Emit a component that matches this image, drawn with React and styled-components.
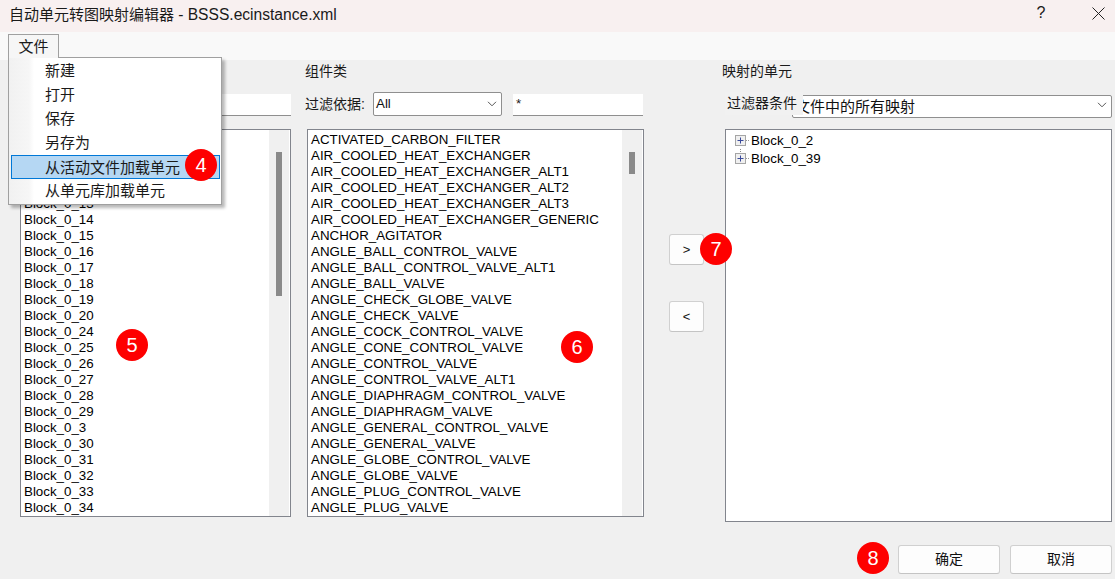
import React from 'react'
import styled, { createGlobalStyle } from 'styled-components'

const GlobalStyle = createGlobalStyle`
  html, body {
    margin: 0;
    padding: 0;
    overflow: hidden;
    background: #f0f0f0;
  }
`

const FONT = `"Liberation Sans", "Noto Sans CJK SC", sans-serif`

// the first rows of this list sit behind the open menu
const leftRows = [
  '', '', '', '', 'Block_0_13',
  'Block_0_14', 'Block_0_15', 'Block_0_16', 'Block_0_17', 'Block_0_18', 'Block_0_19',
  'Block_0_20', 'Block_0_24', 'Block_0_25', 'Block_0_26', 'Block_0_27', 'Block_0_28',
  'Block_0_29', 'Block_0_3', 'Block_0_30', 'Block_0_31', 'Block_0_32', 'Block_0_33', 'Block_0_34',
]

const classRows = [
  'ACTIVATED_CARBON_FILTER', 'AIR_COOLED_HEAT_EXCHANGER', 'AIR_COOLED_HEAT_EXCHANGER_ALT1',
  'AIR_COOLED_HEAT_EXCHANGER_ALT2', 'AIR_COOLED_HEAT_EXCHANGER_ALT3', 'AIR_COOLED_HEAT_EXCHANGER_GENERIC',
  'ANCHOR_AGITATOR', 'ANGLE_BALL_CONTROL_VALVE', 'ANGLE_BALL_CONTROL_VALVE_ALT1', 'ANGLE_BALL_VALVE',
  'ANGLE_CHECK_GLOBE_VALVE', 'ANGLE_CHECK_VALVE', 'ANGLE_COCK_CONTROL_VALVE', 'ANGLE_CONE_CONTROL_VALVE',
  'ANGLE_CONTROL_VALVE', 'ANGLE_CONTROL_VALVE_ALT1', 'ANGLE_DIAPHRAGM_CONTROL_VALVE', 'ANGLE_DIAPHRAGM_VALVE',
  'ANGLE_GENERAL_CONTROL_VALVE', 'ANGLE_GENERAL_VALVE', 'ANGLE_GLOBE_CONTROL_VALVE', 'ANGLE_GLOBE_VALVE',
  'ANGLE_PLUG_CONTROL_VALVE', 'ANGLE_PLUG_VALVE',
]

const menuItems = ['新建', '打开', '保存', '另存为', '从活动文件加载单元', '从单元库加载单元']

const Window = styled.div`
  position: relative;
  width: 1115px;
  height: 579px;
  overflow: hidden;
  display: flex;
  flex-direction: column;
  background: #f0f0f0;
  font-family: ${FONT};
  color: #000;
`

const TitleBar = styled.div`
  height: 32px;
  flex: none;
  box-sizing: border-box;
  display: flex;
  align-items: center;
  padding: 0 0 6px 9px;
  background: #f8f0f0;
  font-size: 15px;
  color: #1a1a1a;
`

const TitleText = styled.span`
  flex: 1;
`

const TitleFile = styled.span`
  font-size: 15.6px;
`

const TitleButton = styled.div`
  width: ${p => p.$width}px;
  height: 26px;
  margin-right: ${p => p.$gap || 0}px;
  display: flex;
  align-items: center;
  justify-content: center;
  font-size: 16px;
`

const MenuBar = styled.div`
  height: 28px;
  flex: none;
  background: #f9f9f9;
`

const Content = styled.div`
  flex: 1;
  display: flex;
  flex-direction: column;
  padding: 0 3px 5px 20px;
`

const Columns = styled.div`
  height: 462px;
  flex: none;
  display: grid;
  grid-template-columns: 271px 337px 49px 387px;
  column-gap: 16px;
`

const Column = styled.div`
  display: flex;
  flex-direction: column;
`

const ColumnTitle = styled.div`
  height: 24px;
  padding-bottom: 4px;
  margin-left: ${p => p.$indent || 0}px;
  display: flex;
  align-items: center;
  font-size: 14px;
  color: #1a1a1a;
  box-sizing: border-box;
`

const FilterRow = styled.div`
  position: relative;
  height: ${p => p.$height || 24}px;
  margin-top: ${p => p.$top || 8}px;
  display: flex;
  align-items: flex-end;
  font-size: 14px;
  color: #1a1a1a;
`

const FilterLabel = styled.span`
  width: 68px;
  flex: none;
  align-self: center;
  margin-left: -2px;
  padding-bottom: 3px;
`

const Combo = styled.div`
  height: ${p => p.$height}px;
  width: ${p => p.$width}px;
  margin-left: ${p => p.$left || 0}px;
  flex: none;
  box-sizing: border-box;
  border: 1px solid #8f8f8f;
  border-radius: 2px;
  background: #fff;
  display: flex;
  align-items: center;
  padding: 0 0 ${p => p.$lift || 0}px 2px;
  font-size: ${p => p.$size || 13.33}px;
  color: #111;
`

const ComboText = styled.span`
  flex: 1;
  white-space: nowrap;
`

const Chevron = styled.svg`
  width: 10px;
  height: 6px;
  margin-right: 4px;
  flex: none;
`

const TextInput = styled.div`
  height: 22px;
  width: ${p => p.$width}px;
  flex: none;
  margin-left: ${p => p.$left || 0}px;
  box-sizing: border-box;
  border-bottom: 1px solid #8f8f8f;
  background: #fff;
  padding: 2px 0 0 3px;
  font-size: 13.33px;
`

const OverLabel = styled.div`
  position: absolute;
  left: 0;
  top: -3px;
  width: 78px;
  height: 23px;
  box-sizing: border-box;
  padding: 0 0 3px 2px;
  background: #f1f1f1;
  display: flex;
  align-items: center;
  font-size: 14px;
  white-space: nowrap;
  overflow: hidden;
  color: #1a1a1a;
`

const ListBox = styled.div`
  height: ${p => p.$height || 388}px;
  margin-top: ${p => p.$top || 13}px;
  box-sizing: border-box;
  border: 1px solid #82858d;
  background: #fff;
  display: flex;
  overflow: hidden;
`

const ListRows = styled.div`
  flex: 1;
  padding: 2px 0 0 3px;
  overflow: hidden;
`

const ListRow = styled.div`
  height: 16px;
  line-height: 16px;
  font-size: 13.33px;
  white-space: nowrap;
`

const ScrollTrack = styled.div`
  width: 20px;
  flex: none;
  margin-right: 1px;
  background: #f0f0f0;
  display: flex;
  justify-content: center;
`

const ScrollThumb = styled.div`
  width: 6px;
  height: ${p => p.$height}px;
  margin-top: 22px;
  background: #8a8a8a;
`

const MoveButtons = styled.div`
  display: flex;
  flex-direction: column;
  align-items: flex-start;
  gap: 36px;
  padding-top: 174px;
  margin-left: 9px;
`

const ActionButton = styled.button`
  width: ${p => p.$width}px;
  height: ${p => p.$height}px;
  padding: 0 0 ${p => p.$lift || 0}px;
  box-sizing: border-box;
  border: 1px solid #d0d0d0;
  border-bottom-color: #c4c4c4;
  border-radius: 3px;
  background: #fdfdfd;
  font-family: ${FONT};
  font-size: ${p => p.$size || 14}px;
  color: #111;
`

const TreeRows = styled.div`
  padding: 1px 0 0 8px;
`

const TreeRow = styled.div`
  height: 18px;
  display: flex;
  align-items: center;
  font-size: 13.33px;
`

const TreeIcon = styled.svg`
  width: 17px;
  height: 18px;
  flex: none;
`

const Footer = styled.div`
  margin-top: 23px;
  display: flex;
  justify-content: flex-end;
  gap: 10px;
`

const FileTab = styled.div`
  position: absolute;
  left: 8px;
  top: 34px;
  width: 51px;
  height: 24px;
  box-sizing: border-box;
  padding-bottom: 3px;
  border: 1px solid #a0a0a0;
  border-bottom: none;
  background: #f6f6f6;
  z-index: 3;
  display: flex;
  align-items: center;
  justify-content: center;
  font-size: 15px;
  color: #1a1a1a;
`

const DropMenu = styled.div`
  position: absolute;
  left: 8px;
  top: 57px;
  width: 214px;
  height: 148px;
  box-sizing: border-box;
  border: 1px solid #a0a0a0;
  box-shadow: 3px 3px 3px rgba(0, 0, 0, 0.28);
  background: linear-gradient(to right, #f1f1f1 0, #f6f6f6 20px, #fff 25px);
  z-index: 2;
  padding: 1px;
`

const MenuItem = styled.div`
  height: 24px;
  box-sizing: border-box;
  display: flex;
  align-items: center;
  margin-left: ${p => (p.$active ? 1 : 0)}px;
  padding: 0 0 ${p => (p.$active ? 2 : 4)}px ${p => (p.$active ? 33 : 35)}px;
  font-size: 15px;
  color: #1a1a1a;
  border: ${p => (p.$active ? '1px solid #0078d7' : 'none')};
  background: ${p => (p.$active ? '#b5d7f3' : 'transparent')};
`

const Badge = styled.div`
  position: absolute;
  left: ${p => p.$x - 16}px;
  top: ${p => p.$y - 16}px;
  width: 32px;
  height: 32px;
  border-radius: 50%;
  background: #fe0000;
  color: #fff;
  display: flex;
  align-items: center;
  justify-content: center;
  font-size: 20px;
  z-index: 4;
`

const badges = [
  { n: 4, x: 201, y: 165 },
  { n: 5, x: 132, y: 345 },
  { n: 6, x: 577, y: 347 },
  { n: 7, x: 716, y: 249 },
  { n: 8, x: 873, y: 558 },
]

const Expander = ({ first }) => (
  <TreeIcon viewBox="0 0 17 18">
    <rect x="1.5" y="4.5" width="10" height="10" fill="#f0f0f0" stroke="#a5a5a5" />
    <path d="M3.5 9.5h6M6.5 6.5v6" stroke="#3a4a9a" fill="none" />
    <path d="M12 9.5h4" stroke="#999" strokeDasharray="1 1" fill="none" />
    {!first && <path d="M6.5 0v4" stroke="#888" strokeDasharray="1 1" fill="none" />}
  </TreeIcon>
)

const ChevronIcon = () => (
  <Chevron viewBox="0 0 10 6">
    <path d="M1 .8l4 4 4-4" stroke="#555" fill="none" />
  </Chevron>
)

const App = () => {
  return (
    <Window>
      <GlobalStyle />
      <TitleBar>
        <TitleText>自动单元转图映射编辑器 <TitleFile>- BSSS.ecinstance.xml</TitleFile></TitleText>
        <TitleButton $width={46} $gap={17}>?</TitleButton>
        <TitleButton $width={34}>
          <svg width="13" height="13" viewBox="0 0 13 13">
            <path d="M.5.5l12 12M12.5.5l-12 12" stroke="#222" fill="none" />
          </svg>
        </TitleButton>
      </TitleBar>
      <MenuBar />

      <Content>
        <Columns>
          <Column>
            <ColumnTitle />
            <FilterRow>
              <TextInput $width={271} />
            </FilterRow>
            <ListBox>
              <ListRows>
                {leftRows.map((name, i) => <ListRow key={i}>{name}</ListRow>)}
              </ListRows>
              <ScrollTrack><ScrollThumb $height={144} /></ScrollTrack>
            </ListBox>
          </Column>

          <Column>
            <ColumnTitle $indent={-2}>组件类</ColumnTitle>
            <FilterRow>
              <FilterLabel>过滤依据:</FilterLabel>
              <Combo $width={129} $height={24} $lift={1}>
                <ComboText>All</ComboText>
                <ChevronIcon />
              </Combo>
              <TextInput $width={130} $left={11}>*</TextInput>
            </FilterRow>
            <ListBox>
              <ListRows>
                {classRows.map(name => <ListRow key={name}>{name}</ListRow>)}
              </ListRows>
              <ScrollTrack><ScrollThumb $height={22} /></ScrollTrack>
            </ListBox>
          </Column>

          <MoveButtons>
            <ActionButton $width={35} $height={31} $size={13}>&gt;</ActionButton>
            <ActionButton $width={35} $height={31} $size={13}>&lt;</ActionButton>
          </MoveButtons>

          <Column>
            <ColumnTitle $indent={-3}>映射的单元</ColumnTitle>
            <FilterRow $top={11} $height={23}>
              <Combo $width={320} $height={23} $left={67} $size={15} $lift={3}>
                <ComboText>文件中的所有映射</ComboText>
                <ChevronIcon />
              </Combo>
              <OverLabel>过滤器条件</OverLabel>
            </FilterRow>
            <ListBox $height={393} $top={11}>
              <TreeRows>
                <TreeRow><Expander first />Block_0_2</TreeRow>
                <TreeRow><Expander />Block_0_39</TreeRow>
              </TreeRows>
            </ListBox>
          </Column>
        </Columns>

        <Footer>
          <ActionButton $width={102} $height={29} $lift={3}>确定</ActionButton>
          <ActionButton $width={102} $height={29} $lift={3}>取消</ActionButton>
        </Footer>
      </Content>

      <FileTab>文件</FileTab>
      <DropMenu>
        {menuItems.map((item, i) => (
          <MenuItem key={item} $active={i === 4}>{item}</MenuItem>
        ))}
      </DropMenu>

      {badges.map(b => <Badge key={b.n} $x={b.x} $y={b.y}>{b.n}</Badge>)}
    </Window>
  )
}

export default App
